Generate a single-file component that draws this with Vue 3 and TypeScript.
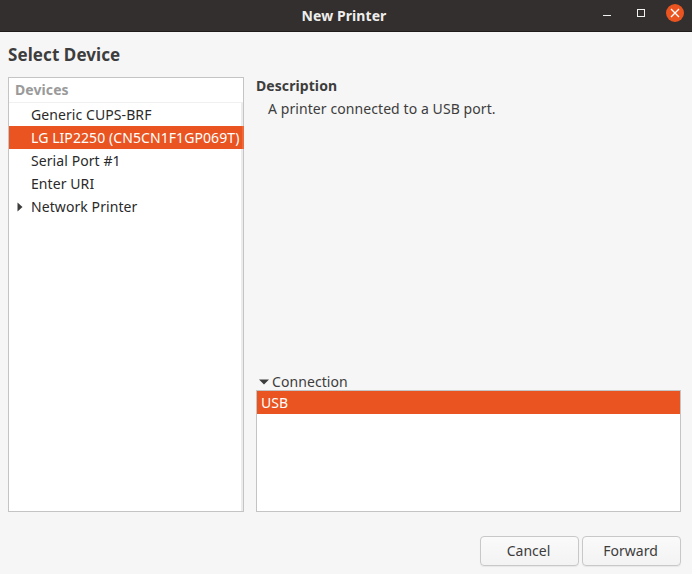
<script setup lang="ts">
interface Row { label: string; selected?: boolean; expander?: boolean }
const rows: Row[] = [
  { label: 'Generic CUPS-BRF' },
  { label: 'LG LIP2250 (CN5CN1F1GP069T)', selected: true },
  { label: 'Serial Port #1' },
  { label: 'Enter URI' },
  { label: 'Network Printer', expander: true },
]
</script>

<template>
  <div class="window">
    <header class="titlebar">
      <span class="title">New Printer</span>
      <div class="controls">
        <svg class="ctl" width="8" height="10" viewBox="0 0 8 10"><path d="M0 7.5h8" stroke="#f2f2f2" stroke-width="1" fill="none" /></svg>
        <svg class="ctl" width="8" height="10" viewBox="0 0 8 10"><rect x="0.5" y="1.5" width="7" height="7" stroke="#f2f2f2" stroke-width="1" fill="none" /></svg>
        <span class="close">
          <svg width="10" height="10" viewBox="0 0 10 10"><path d="M1 1l8 8M9 1l-8 8" stroke="#fff" stroke-width="1.3" fill="none" /></svg>
        </span>
      </div>
    </header>
    <main class="content">
      <h1 class="heading">Select Device</h1>
      <div class="panes">
        <section class="devices">
          <div class="col-head">Devices</div>
          <div class="rows">
            <div class="row" v-for="r in rows" :key="r.label" :class="{ selected: r.selected }">
              <svg v-if="r.expander" class="expander" width="6" height="10" viewBox="0 0 6 10"><path d="M0.5 0.5L5.5 5L0.5 9.5Z" fill="#3d3d3d" /></svg>
              <span>{{ r.label }}</span>
            </div>
          </div>
        </section>
        <section class="detail">
          <div class="desc-title">Description</div>
          <div class="desc-text">A printer connected to a USB port.</div>
          <div class="conn-head">
            <svg width="10" height="6" viewBox="0 0 10 6"><path d="M0 0.5H10L5 5.5Z" fill="#3d3d3d" /></svg>
            <span>Connection</span>
          </div>
          <div class="conn-list"><div class="conn-row">USB</div></div>
        </section>
      </div>
      <footer class="actions">
        <button class="btn">Cancel</button>
        <button class="btn">Forward</button>
      </footer>
    </main>
  </div>
</template>

<style>
html, body { margin: 0; background: #f6f6f6; }
</style>

<style scoped>
.window {
  width: 692px;
  height: 574px;
  display: flex;
  flex-direction: column;
  background: #f6f6f6;
  color: #3d3d3d;
  font-family: "Noto Sans", "Open Sans", sans-serif;
  font-size: 14px;
  letter-spacing: 0.08px;
  overflow: hidden;
}
.titlebar {
  height: 31px;
  flex: none;
  box-sizing: content-box;
  background: #322f2e;
  border-bottom: 1px solid #1e1c1b;
  display: flex;
  align-items: center;
  justify-content: center;
  padding-right: 4px;
  position: relative;
}
.title { color: #eeeeec; font-weight: 700; font-size: 14px; }
.controls {
  position: absolute;
  right: 0;
  top: 4px;
  height: 18px;
  display: flex;
  align-items: center;
}
.ctl { margin-right: 26px; }
.close {
  width: 18px;
  height: 18px;
  margin-left: -5px;
  margin-right: 8px;
  border-radius: 50%;
  background: #e95420;
  display: flex;
  align-items: center;
  justify-content: center;
}
.content {
  flex: 1;
  display: flex;
  flex-direction: column;
  padding: 12px 11px 8px 8px;
  min-height: 0;
}
.heading {
  margin: 0 0 11px;
  height: 22px;
  line-height: 22px;
  font-size: 17px;
  font-weight: 700;
  color: #3d3d3d;
}
.panes {
  display: flex;
  gap: 12px;
  height: 435px;
}
.devices {
  width: 236px;
  box-sizing: border-box;
  background: #fff;
  border: 1px solid #c4c4c4;
  display: flex;
  flex-direction: column;
}
.col-head {
  height: 25px;
  line-height: 23px;
  padding-left: 6px;
  box-sizing: border-box;
  border-bottom: 1px solid #f0f0f0;
  color: #9a9a9a;
  font-weight: 700;
}
.rows {
  flex: 1;
  box-shadow: inset -2px 0 0 #ececec;
}
.row {
  height: 23px;
  line-height: 23px;
  padding-left: 22px;
  position: relative;
  color: #2a2a2a;
  white-space: nowrap;
}
.row.selected {
  margin-right: -1px;
  background: #e95420;
  color: #fff;
  box-shadow: inset -2px 0 0 #ec6a3c;
}
.expander { position: absolute; left: 8px; top: 7px; }
.detail { flex: 1; display: flex; flex-direction: column; }
.desc-title { height: 20px; line-height: 18px; font-weight: 700; }
.desc-text { margin-left: 12px; height: 20px; line-height: 24px; color: #3d3d3d; }
.conn-head {
  margin-top: auto;
  height: 16px;
  line-height: 16px;
  display: flex;
  align-items: center;
  gap: 3px;
  padding-left: 3px;
}
.conn-list {
  height: 122px;
  box-sizing: border-box;
  background: #fff;
  border: 1px solid #c4c4c4;
}
.conn-row {
  height: 23px;
  line-height: 23px;
  padding-left: 4px;
  background: #e95420;
  color: #fff;
}
.actions {
  margin-top: 24px;
  display: flex;
  justify-content: flex-end;
  gap: 3px;
}
.btn {
  width: 99px;
  height: 30px;
  box-sizing: border-box;
  border: 1px solid #c8c8c8;
  border-radius: 4px;
  background: linear-gradient(#fafafa, #f3f3f3);
  box-shadow: 0 1px 1px rgba(0, 0, 0, 0.06);
  color: #3d3d3d;
  font: inherit;
  padding: 0 2px 2px 0;
}
</style>
